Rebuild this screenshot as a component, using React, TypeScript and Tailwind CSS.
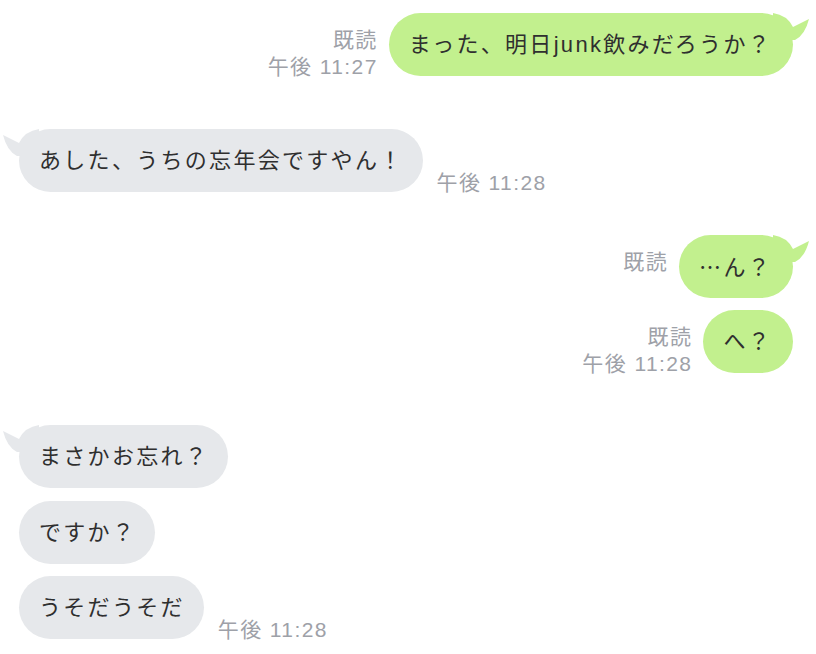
import React from "react";

function TailRight({ color }: { color: string }) {
  return (
    <svg
      className="absolute top-0 right-[-16px]"
      width="36"
      height="28"
      viewBox="0 0 36 28"
    >
      <path d="M0,0 Q14,2 20,14 Q28,10 36,6 Q32,22 22,27 L0,27 Z" fill={color} />
    </svg>
  );
}

function TailLeft({ color }: { color: string }) {
  return (
    <svg
      className="absolute top-0 left-[-16px]"
      width="36"
      height="28"
      viewBox="0 0 36 28"
    >
      <path d="M36,0 Q22,2 16,14 Q8,10 0,6 Q4,22 14,27 L36,27 Z" fill={color} />
    </svg>
  );
}

const GREEN = "#c2f08e";
const GRAY = "#e6e8eb";

function OutBubble({ children, tail }: { children: React.ReactNode; tail?: boolean }) {
  return (
    <div className="relative flex h-[63px] items-center rounded-full bg-[#c2f08e] pl-5 pr-[21px] text-[22px] leading-[31px] tracking-[2.3px] text-[#2f2f2f] whitespace-nowrap">
      {tail && <TailRight color={GREEN} />}
      <span className="relative">{children}</span>
    </div>
  );
}

function InBubble({ children, tail }: { children: React.ReactNode; tail?: boolean }) {
  return (
    <div className="relative flex h-[63px] items-center rounded-full bg-[#e6e8eb] pl-5 pr-[19px] text-[22px] leading-[31px] tracking-[2.3px] text-[#2f2f2f] whitespace-nowrap">
      {tail && <TailLeft color={GRAY} />}
      <span className="relative">{children}</span>
    </div>
  );
}

function Meta({ read, time }: { read?: boolean; time?: string }) {
  return (
    <div className="mt-[13px] mb-[-20px] flex flex-col items-end text-[21px] leading-[27px] tracking-[1.4px] text-[#9ea1a8] whitespace-nowrap">
      {read && <span>既読</span>}
      {time && <span>{time}</span>}
    </div>
  );
}

function Time({ time }: { time: string }) {
  return (
    <div className="mb-[-4px] text-[21px] leading-[27px] tracking-[1.4px] text-[#9ea1a8] whitespace-nowrap">
      {time}
    </div>
  );
}

export default function App() {
  return (
    <div className="w-[816px] h-[654px] overflow-hidden bg-white pt-[13px] font-['Liberation_Sans','Noto_Sans_CJK_JP',sans-serif]">
      {/* 1 */}
      <div className="flex items-start justify-end gap-[11px] pr-[23px]">
        <Meta read time="午後 11:27" />
        <OutBubble tail>まった、明日junk飲みだろうか？</OutBubble>
      </div>

      {/* 2 */}
      <div className="mt-[53px] flex items-end gap-[14px] pl-[19px]">
        <InBubble tail>あした、うちの忘年会ですやん！</InBubble>
        <Time time="午後 11:28" />
      </div>

      {/* 3 */}
      <div className="mt-[43px] flex items-start justify-end gap-[11px] pr-[23px]">
        <Meta read />
        <OutBubble tail>
          <span className="font-['Noto_Sans_CJK_JP',sans-serif]">…</span>ん？
        </OutBubble>
      </div>

      {/* 4 */}
      <div className="mt-[12px] flex items-start justify-end gap-[11px] pr-[23px]">
        <Meta read time="午後 11:28" />
        <OutBubble>へ？</OutBubble>
      </div>

      {/* 5 */}
      <div className="mt-[52px] flex items-end pl-[19px]">
        <InBubble tail>まさかお忘れ？</InBubble>
      </div>

      {/* 6 */}
      <div className="mt-[13px] flex items-end pl-[19px]">
        <InBubble>ですか？</InBubble>
      </div>

      {/* 7 */}
      <div className="mt-[12px] flex items-end gap-[14px] pl-[19px]">
        <InBubble>うそだうそだ</InBubble>
        <Time time="午後 11:28" />
      </div>
    </div>
  );
}
